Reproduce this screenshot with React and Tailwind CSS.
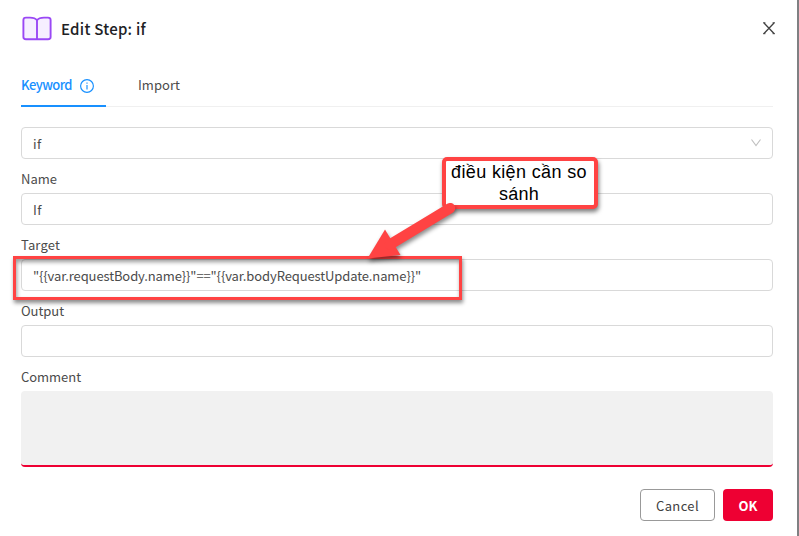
import React from "react";

function Field({ label, value, width }) {
  return (
    <label className="block">
      <span className="flex h-[34px] items-center pt-2 pb-[2px]">
        <Fit width={width}>{label}</Fit>
      </span>
      <span className="flex h-8 items-center rounded-[4px] border border-[#d9d9d9] px-[11px] pt-[2px]">{value}</span>
    </label>
  );
}

/* Text set to a fixed advance width. */
function Fit({ width, children, className = "" }) {
  const ref = React.useRef(null);
  React.useLayoutEffect(() => {
    const el = ref.current;
    el.style.letterSpacing = "0px";
    const natural = el.getBoundingClientRect().width;
    el.style.letterSpacing = (width - natural) / children.length + "px";
  }, [width, children]);
  return <span ref={ref} className={"inline-block whitespace-pre " + className}>{children}</span>;
}

function BookIcon() {
  return (
    <svg width="31" height="26" viewBox="0 0 31 26" fill="#f6efff" stroke="#9a48f5" strokeWidth="1.9" strokeLinejoin="round">
      <path d="M16 4.2C14.5 2.2 12 1.6 9 1.6H5Q2.4 1.6 2.4 4V21Q2.4 23.2 5 23.2H27Q29.6 23.2 29.6 21V4Q29.6 1.6 27 1.6H23C20 1.6 17.5 2.2 16 4.2Z" />
      <path d="M16 4.2V23.2" />
    </svg>
  );
}

export default function App() {
  return (
    <div className="relative flex h-[536px] w-[799px] overflow-hidden bg-white font-['Noto_Sans_CJK_SC','Noto_Sans',sans-serif] text-[13px] leading-[22px] text-[#4b4b4b]">
      <main className="w-[797px] pr-6 pl-[21px]">
        <header className="flex h-[65px] items-start pt-4">
          <BookIcon />
          <h1 className="mt-[2px] ml-[9px] text-[15px] font-medium text-[#202124]">
            <Fit width={85}>Edit Step: if</Fit>
          </h1>
          <svg className="mt-[6px] mr-[-3px] ml-auto" width="14" height="14" viewBox="0 0 14 14" fill="none" stroke="#414141" strokeWidth="1.3">
            <path d="M2 1L12 11.5M12 1L2 11.5" />
            <path d="M1 .8h2.4M10.6 .8h2.4M1 11.7h2.4M10.6 11.7h2.4" strokeWidth="1" />
          </svg>
        </header>
        <nav className="flex h-[42px] border-b border-[#f0f0f0]">
          <div className="flex h-[42px] w-[85px] items-center border-b-2 border-[#1890ff] pb-px font-medium text-[#1890ff]">
            <Fit width={51}>Keyword</Fit>
            <svg className="mt-[2px] ml-2" width="14" height="14" viewBox="0 0 14 14" fill="none" stroke="currentColor">
              <circle cx="7" cy="7" r="6.4" strokeWidth="1.15" />
              <path d="M7 6v4.5M7 3.5v1.2" strokeWidth="1.15" />
            </svg>
          </div>
          <div className="ml-8 flex items-center pb-px">
            <Fit width={42}>Import</Fit>
          </div>
        </nav>
        <div className="mt-5 flex h-8 items-center justify-between rounded-[4px] border border-[#d9d9d9] px-[11px] pt-px">
          <Fit width={8.5}>if</Fit>
          <svg className="-mt-px -mr-px" width="12" height="12" viewBox="0 0 12 12" fill="none" stroke="#bfbfbf" strokeWidth="1.1">
            <path d="M1.5 2.5L6 8.6L10.5 2.5" />
          </svg>
        </div>
        <Field label="Name" width={36} value={<Fit width={9}>If</Fit>} />
        <Field label="Target" width={39} value={<Fit width={388}>{'"{{var.requestBody.name}}"=="{{var.bodyRequestUpdate.name}}"'}</Fit>} />
        <Field label="Output" width={43} value="" />
        <div className="flex h-[34px] items-center pt-2 pb-[2px]">
          <Fit width={60}>Comment</Fit>
        </div>
        <div className="h-[76px] rounded-[4px] border-b-2 border-[#ee0033] bg-[#f1f1f1]" />
        <footer className="mt-[22px] flex justify-end gap-2">
          <button className="flex h-8 w-[75px] items-center justify-center rounded-[4px] border border-[#999] pt-px text-[#414141]">
            <Fit width={43}>Cancel</Fit>
          </button>
          <button className="flex h-8 w-[50px] items-center justify-center rounded-[4px] bg-[#ee0033] pt-px font-bold text-white">
            <Fit width={19}>OK</Fit>
          </button>
        </footer>
      </main>
      <aside className="w-[2px] bg-[#7f8082]" />

      {/* Annotations over the form */}
      <div className="absolute top-[256px] left-[13px] h-[44px] w-[449px] border-[3px] border-[#ff4343] shadow-[1px_3px_4px_rgba(0,0,0,.45),inset_1px_3px_4px_rgba(0,0,0,.4)]" />
      <div className="absolute top-[157px] left-[442px] flex h-[52px] w-[156px] justify-center rounded-[5px] border-4 border-[#ff4343] bg-white text-center font-['Liberation_Sans',sans-serif] text-[18px] leading-[22px] text-black shadow-[1px_3px_4px_rgba(0,0,0,.5)]">
        <div className="-ml-[2px]">
          <Fit width={136}>điều kiện cần so</Fit>
          <Fit width={40} className="mx-auto block w-fit">sánh</Fit>
        </div>
      </div>
      <svg className="absolute top-[190px] left-[355px] drop-shadow-[1px_3px_2px_rgba(0,0,0,.45)]" width="115" height="80" viewBox="355 190 115 80" fill="#ff4343" stroke="#ff4343">
        <path d="M367.5 258.5L385 229.5L400.5 255Z" stroke="none" />
        <path d="M390 244.5L450 208.2" strokeWidth="10.5" strokeLinecap="round" />
      </svg>
    </div>
  );
}
